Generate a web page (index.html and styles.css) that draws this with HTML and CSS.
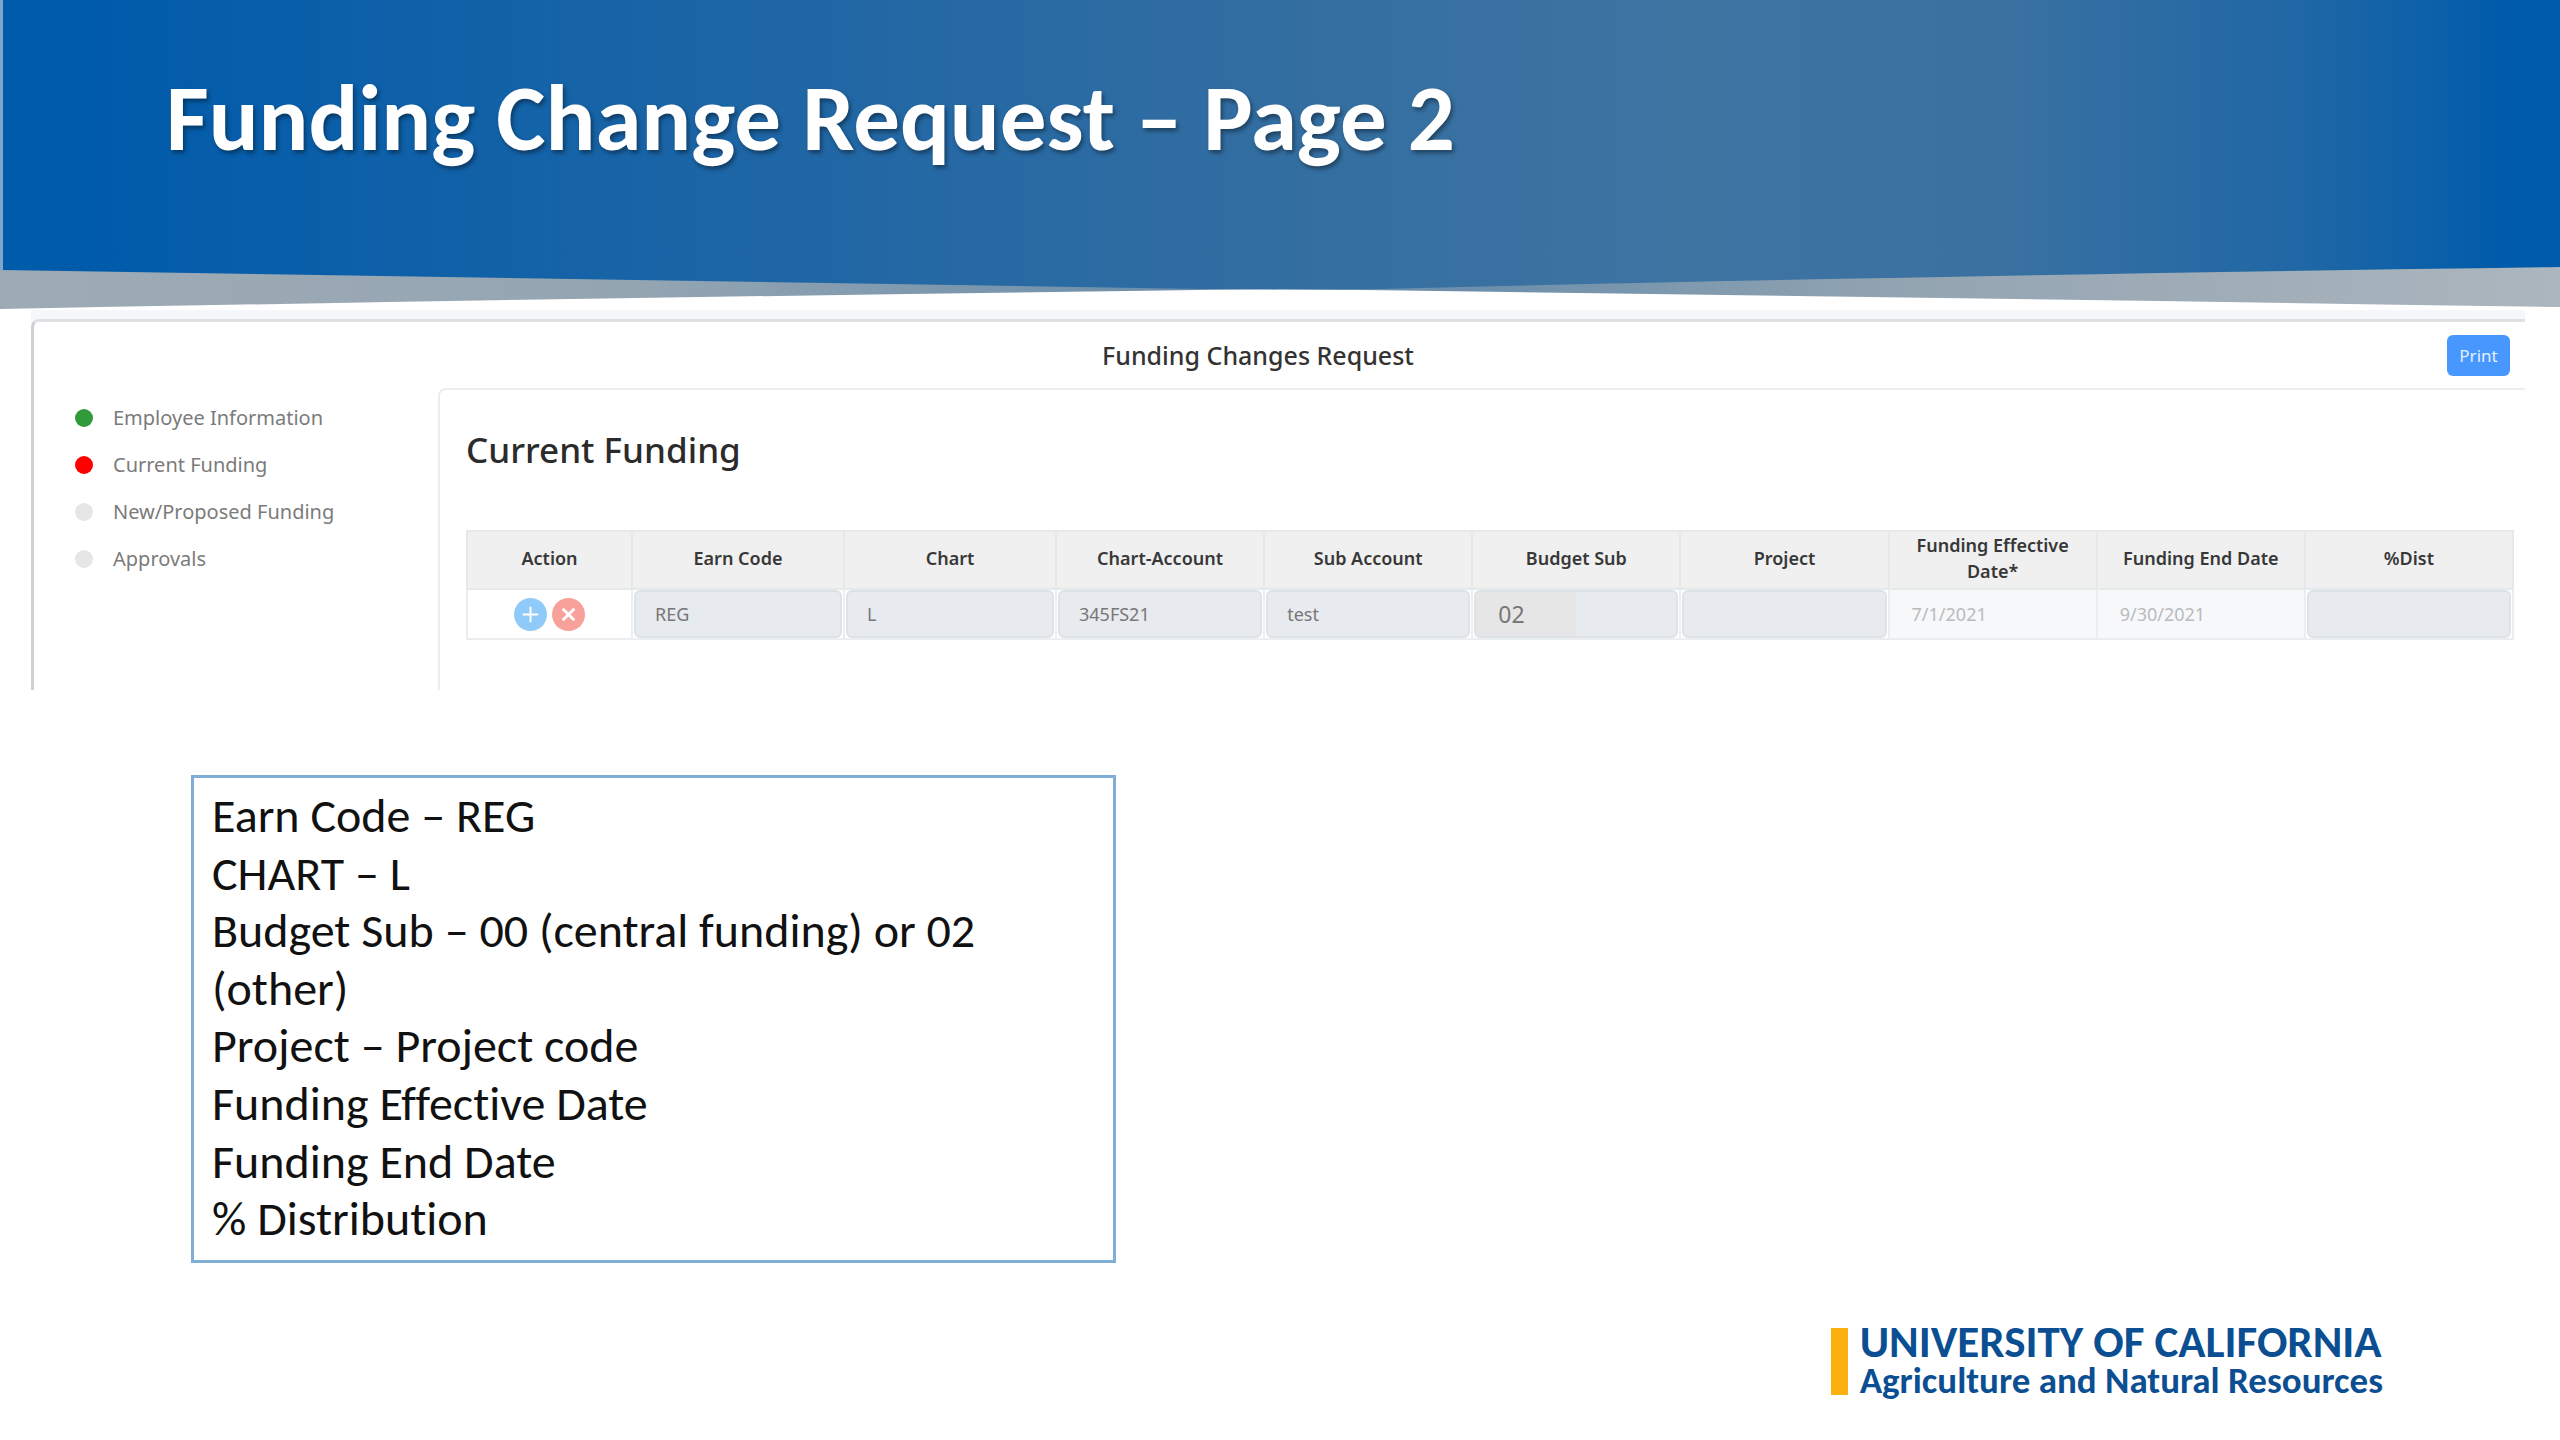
FILE: index.html
```html
<!DOCTYPE html>
<html lang="en">
<head>
  <meta charset="UTF-8">
  <title>Funding Change Request – Page 2</title>
  <link rel="stylesheet" href="styles.css">
</head>
<body>
  <header class="hero">
    <svg class="hero-bg" viewBox="0 0 2560 310" preserveAspectRatio="none" aria-hidden="true">
      <defs>
        <linearGradient id="blue" x1="0" x2="1" y1="0" y2="0">
          <stop offset="0" stop-color="#005bab"/>
          <stop offset="0.03" stop-color="#005bab"/>
          <stop offset="0.28" stop-color="#1c65a6"/>
          <stop offset="0.5" stop-color="#336ea1"/>
          <stop offset="0.66" stop-color="#3d74a2"/>
          <stop offset="0.78" stop-color="#3a71a1"/>
          <stop offset="0.9" stop-color="#1f67a5"/>
          <stop offset="0.98" stop-color="#005bab"/>
          <stop offset="1" stop-color="#005bab"/>
        </linearGradient>
        <linearGradient id="gray" x1="0" x2="1" y1="0" y2="0">
          <stop offset="0" stop-color="#9eabb5"/>
          <stop offset="0.25" stop-color="#94a5b2"/>
          <stop offset="0.45" stop-color="#6d8fab"/>
          <stop offset="0.58" stop-color="#6d8fab"/>
          <stop offset="0.75" stop-color="#94a5b2"/>
          <stop offset="1" stop-color="#acb6be"/>
        </linearGradient>
      </defs>
      <path fill="url(#gray)" d="M0 260H2560V307Q1900 297 1280 289Q640 297 0 309Z"/>
      <path fill="url(#blue)" d="M0 0H2560V267Q1900 276 1380 289Q1300 290 1200 289Q640 280 0 270Z"/>
      <path fill="#7fa6cb" d="M0 0H3V270H0Z"/>
    </svg>
    <h1>Funding Change Request – Page 2</h1>
  </header>

  <main>
    <section class="panel">
      <div class="panel-inner">
        <div class="panel-header">
          <h2>Funding Changes Request</h2>
          <button type="button" class="print-btn">Print</button>
        </div>
        <div class="panel-body">
          <nav class="steps">
            <a href="#employee" class="step"><span class="dot done"></span>Employee Information</a>
            <a href="#current" class="step"><span class="dot current"></span>Current Funding</a>
            <a href="#proposed" class="step"><span class="dot"></span>New/Proposed Funding</a>
            <a href="#approvals" class="step"><span class="dot"></span>Approvals</a>
          </nav>

          <div class="content" id="current">
            <h3>Current Funding</h3>
            <table class="funding">
              <thead>
                <tr>
                  <th class="col-action">Action</th>
                  <th class="col-wide">Earn Code</th>
                  <th class="col-wide">Chart</th>
                  <th>Chart-Account</th>
                  <th>Sub Account</th>
                  <th>Budget Sub</th>
                  <th>Project</th>
                  <th>Funding Effective Date*</th>
                  <th>Funding End Date</th>
                  <th>%Dist</th>
                </tr>
              </thead>
              <tbody>
                <tr>
                  <td>
                    <div class="actions">
                      <button type="button" class="icon-btn" aria-label="Add row">
                        <svg viewBox="0 0 34 34"><circle cx="17" cy="17" r="17" fill="#90caf9"/><path d="M17 9V25M9 17H25" stroke="#fff" stroke-width="2"/></svg>
                      </button>
                      <button type="button" class="icon-btn" aria-label="Delete row">
                        <svg viewBox="0 0 34 34"><circle cx="17" cy="17" r="17" fill="#f8a09a"/><path d="M11 11L23 23M23 11L11 23" stroke="#fff" stroke-width="3"/></svg>
                      </button>
                    </div>
                  </td>
                  <td><input type="text" aria-label="Earn Code" value="REG" disabled></td>
                  <td><input type="text" aria-label="Chart" value="L" disabled></td>
                  <td><input type="text" aria-label="Chart-Account" value="345FS21" disabled></td>
                  <td><input type="text" aria-label="Sub Account" value="test" disabled></td>
                  <td><input type="text" class="budget" aria-label="Budget Sub" value="02" disabled></td>
                  <td><input type="text" aria-label="Project" disabled></td>
                  <td class="date"><input type="text" aria-label="Funding Effective Date" value="7/1/2021" disabled></td>
                  <td class="date"><input type="text" aria-label="Funding End Date" value="9/30/2021" disabled></td>
                  <td><input type="text" aria-label="%Dist" disabled></td>
                </tr>
              </tbody>
            </table>
          </div>
        </div>
      </div>
    </section>

    <section class="notes">
      <p>Earn Code – REG</p>
      <p>CHART – L</p>
      <p>Budget Sub – 00 (central funding) or 02 (other)</p>
      <p>Project – Project code</p>
      <p>Funding Effective Date</p>
      <p>Funding End Date</p>
      <p>% Distribution</p>
    </section>
  </main>

  <footer class="footer">
    <div class="logo">
      <span class="logo-bar"></span>
      <div>
        <div class="logo-name">UNIVERSITY OF CALIFORNIA</div>
        <div class="logo-unit">Agriculture and Natural Resources</div>
      </div>
    </div>
  </footer>
</body>
</html>
```
FILE: styles.css
```css
:root {
  --slide-font: Carlito, Lato, sans-serif;
  --app-font: "Noto Sans", "Open Sans", sans-serif;
  --input-bg: #e7eaee;
  --uc-blue: #0b4f92;
  --uc-gold: #fbb00f;
}

* {
  box-sizing: border-box;
}

body {
  margin: 0;
  min-height: 100vh;
  display: flex;
  flex-direction: column;
  font-family: var(--slide-font);
  font-variant-ligatures: none;
  background-color: #fff;
  color: #111;
}

h1, h2, h3, p {
  margin: 0;
}

.hero {
  position: relative;
  height: 308px;
  padding: 62px 166px;
}

.hero-bg {
  position: absolute;
  top: 0;
  left: 0;
  width: 100%;
  height: 310px;
}

.hero h1 {
  position: relative;
  font-size: 93px;
  line-height: 112px;
  color: #fff;
  text-shadow: 2px 3px 4px rgba(0, 0, 0, 0.4);
}

.panel {
  position: relative;
  margin: 0 35px 0 31px;
  padding-top: 11px;
  font-family: var(--app-font);
  background: linear-gradient(to bottom, transparent 2px, #f6f7fa 2px, #f6f7fa 14px, transparent 14px);
}

.panel-inner {
  border-top: 3px solid #dfe2e5;
  border-left: 3px solid #cdd1d4;
  border-top-left-radius: 8px;
  background-color: #fff;
}

.panel-header {
  display: grid;
  grid-template-columns: 1fr auto 1fr;
  align-items: center;
  height: 66px;
  padding-right: 15px;
}

.panel-header h2 {
  grid-column: 2;
  margin-right: 28px;
  font-size: 25px;
  font-weight: 500;
  color: #333;
}

.print-btn {
  justify-self: end;
  width: 63px;
  height: 41px;
  padding: 0;
  border: none;
  border-radius: 6px;
  background-color: #4797ff;
  color: #e4f0ff;
  font-family: inherit;
  font-size: 17px;
}

.panel-body {
  display: flex;
}

.steps {
  flex: 0 0 404px;
  display: flex;
  flex-direction: column;
  padding: 6px 0 0 41px;
}

.step {
  display: flex;
  align-items: center;
  gap: 20px;
  height: 47px;
  font-size: 20px;
  color: #7b7b7b;
  text-decoration: none;
}

.dot {
  width: 18px;
  height: 18px;
  border-radius: 50%;
  background-color: #e6e6e6;
}

.dot.done {
  background-color: #319b3c;
}

.dot.current {
  background-color: #fe0000;
}

.content {
  flex: 1;
  height: 302px;
  padding: 36px 11px 0 26px;
  border-top: 2px solid #eceded;
  border-left: 2px solid #eceded;
  border-top-left-radius: 8px;
}

.content h3 {
  font-size: 35px;
  line-height: 48px;
  font-weight: 500;
  color: #2b2b2b;
}

.funding {
  width: 100%;
  margin-top: 56px;
  table-layout: fixed;
  border-collapse: collapse;
}

.funding th {
  height: 58px;
  padding: 0 10px 4px;
  border: 2px solid #e6e9ea;
  background-color: #f0f0f0;
  font-size: 18px;
  line-height: 26px;
  font-weight: 600;
  color: #383838;
}

.funding .col-action {
  width: 165px;
}

.funding .col-wide {
  width: 212px;
}

.funding td {
  height: 50px;
  padding: 0 1px;
  border: 2px solid #eaeeef;
}

.funding input {
  display: block;
  width: 100%;
  height: 48px;
  padding: 0 19px;
  border: 2px solid #dde2e6;
  border-radius: 6px;
  background-color: var(--input-bg);
  font-family: inherit;
  font-size: 18px;
  color: #777;
}

.funding .budget {
  padding-left: 22px;
  background-image: linear-gradient(#e6e6e6, #e6e6e6);
  background-size: 100px 100%;
  background-repeat: no-repeat;
  font-size: 23px;
}

.funding td.date {
  background-color: #f6f8fa;
}

.funding .date input {
  border-color: transparent;
  background-color: transparent;
  color: #b9bbbd;
}

.actions {
  display: flex;
  justify-content: center;
  gap: 5px;
}

.icon-btn {
  width: 33px;
  height: 33px;
  padding: 0;
  border: none;
  background: none;
}

.icon-btn svg {
  display: block;
  width: 100%;
}

.notes {
  width: 925px;
  margin: 85px 0 0 191px;
  padding: 9px 18px 12px;
  border: 3px solid #7fafd8;
  font-size: 48px;
  line-height: 1.2;
}

.footer {
  display: flex;
  justify-content: flex-end;
  margin-top: auto;
  padding: 0 177px 40px 0;
}

.logo {
  display: flex;
  align-items: center;
  gap: 12px;
  color: var(--uc-blue);
  font-weight: 700;
}

.logo-bar {
  width: 17px;
  height: 67px;
  background-color: var(--uc-gold);
}

.logo-name {
  font-size: 45px;
  line-height: 40px;
}

.logo-unit {
  font-size: 37px;
  line-height: 38px;
}
```
